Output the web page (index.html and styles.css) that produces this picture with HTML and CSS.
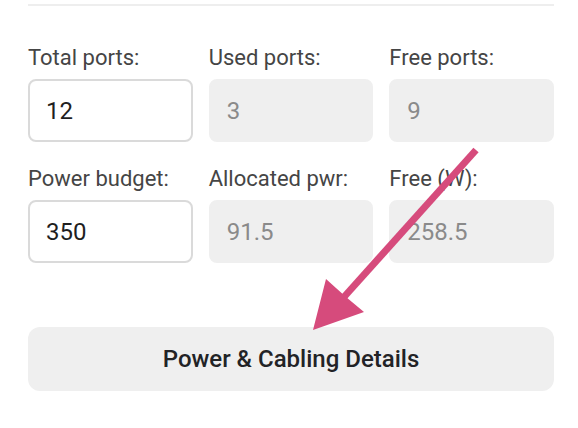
FILE: index.html
```html
<!DOCTYPE html>
<html lang="en">
<head>
<meta charset="utf-8">
<title>Ports</title>
<link rel="stylesheet" href="styles.css">
</head>
<body>
<div class="panel">
  <div class="divider"></div>
  <div class="grid">
    <div class="field">
      <span class="label">Total ports:</span>
      <div class="input editable">12</div>
    </div>
    <div class="field">
      <span class="label">Used ports:</span>
      <div class="input readonly">3</div>
    </div>
    <div class="field">
      <span class="label">Free ports:</span>
      <div class="input readonly">9</div>
    </div>
    <div class="field">
      <span class="label">Power budget:</span>
      <div class="input editable">350</div>
    </div>
    <div class="field">
      <span class="label">Allocated pwr:</span>
      <div class="input readonly">91.5</div>
    </div>
    <div class="field">
      <span class="label">Free (W):</span>
      <div class="input readonly">258.5</div>
    </div>
  </div>
  <button class="details-btn">Power &amp; Cabling Details</button>
</div>
<svg class="annotation" viewBox="0 0 578 428" width="578" height="428" aria-hidden="true">
  <line x1="476" y1="150" x2="344" y2="297" stroke="#d64b7c" stroke-width="7"/>
  <polygon points="313,330 326,279 346,297 364,312" fill="#d64b7c"/>
</svg>
</body>
</html>
```

FILE: styles.css
```css
html, body {
  margin: 0;
  padding: 0;
  background: #ffffff;
}

body {
  font-family: Roboto, "Noto Sans", "Liberation Sans", sans-serif;
  width: 578px;
  height: 428px;
  overflow: hidden;
  position: relative;
}

.panel {
  padding: 4px 24px 0 28px;
}

.divider {
  height: 2px;
  background: #eeeeee;
}

.grid {
  display: grid;
  grid-template-columns: repeat(3, 1fr);
  column-gap: 16px;
  row-gap: 24px;
  margin-top: 39px;
}

.field {
  display: flex;
  flex-direction: column;
  gap: 8px;
}

.label {
  font-size: 22px;
  line-height: 26px;
  color: #454545;
}

.input {
  box-sizing: border-box;
  height: 63px;
  border-radius: 8px;
  padding: 0 16px;
  font-size: 24px;
  display: flex;
  align-items: center;
}

.input.editable {
  border: 2px solid #dadada;
  background: #ffffff;
  color: #1f1f1f;
}

.input.readonly {
  border: 2px solid #efefef;
  background: #efefef;
  color: #8a8a8a;
}

.details-btn {
  display: block;
  width: 100%;
  height: 64px;
  margin-top: 64px;
  border: 0;
  border-radius: 12px;
  background: #efefef;
  font-family: Roboto, "Noto Sans", "Liberation Sans", sans-serif;
  font-size: 24px;
  font-weight: 500;
  color: #222326;
}

.annotation {
  position: absolute;
  left: 0;
  top: 0;
  pointer-events: none;
}
```
